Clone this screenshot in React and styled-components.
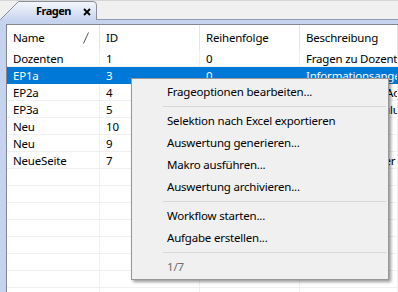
import React from "react";
import styled, { createGlobalStyle } from "styled-components";

const GlobalStyle = createGlobalStyle`
  body {
    margin: 0;
    font-family: "Noto Sans", "Open Sans", sans-serif;
    font-size: 11.5px;
    letter-spacing: -0.2px;
    color: #000;
  }
`;

const Window = styled.div`
  position: relative;
  width: 398px;
  height: 292px;
  overflow: hidden;
  background: #f0f0f0;
  display: flex;
  flex-direction: column;
`;

const TabStrip = styled.div`
  height: 20px;
  flex: none;
  display: flex;
  align-items: flex-end;
  border-top: 1px solid #d6d6d6;
  box-sizing: border-box;
  border-bottom: 1px solid #8f9bb3;
`;

const Tab = styled.div`
  position: relative;
  width: 97px;
  height: 20px;
  margin-bottom: -1px;
  display: flex;
  align-items: center;
  gap: 12px;
  padding-left: 36px;
  box-sizing: border-box;

  svg.shape {
    position: absolute;
    left: 0;
    top: 0;
  }
`;

const TabLabel = styled.span`
  position: relative;
  font-weight: bold;
  font-size: 11px;
  letter-spacing: -0.5px;
  line-height: 16px;
  margin-top: 1px;
`;

const TabClose = styled.svg`
  position: relative;
  margin-top: 3px;
`;

const Pane = styled.div`
  flex: 1;
  background: #c6d3ee;
  padding: 4px 0 0 6px;
  display: flex;
  min-height: 0;
`;

const Grid = styled.div`
  flex: 1;
  background: #fff;
  border-left: 1px solid #828790;
  border-top: 1px solid #828790;
  display: flex;
  flex-direction: column;
  overflow: hidden;
`;

const cols = "93px 100px 100px 1fr";

const HeaderRow = styled.div`
  display: grid;
  grid-template-columns: ${cols};
  height: 25px;
  flex: none;
`;

const HeaderCell = styled.div`
  position: relative;
  padding-left: 6px;
  line-height: 25px;
  border-right: 1px solid #e5e5e5;
  white-space: nowrap;

  svg {
    position: absolute;
    left: 75px;
    top: 7px;
  }
`;

const Row = styled.div`
  display: grid;
  grid-template-columns: ${cols};
  height: 17px;
  flex: none;
  background: ${(p) => (p.$selected ? "#0078d7" : "#fff")};
  color: ${(p) => (p.$selected ? "#fff" : "#000")};
`;

const Cell = styled.div`
  padding-left: 6px;
  line-height: 17px;
  white-space: nowrap;
  overflow: hidden;
  box-sizing: border-box;
  border-right: 1px solid ${(p) => (p.$selected ? "#0078d7" : "#f0f0f0")};
  border-bottom: 1px solid ${(p) => (p.$selected ? "#0078d7" : "#f0f0f0")};
`;

const Menu = styled.div`
  position: absolute;
  left: 131px;
  top: 78px;
  width: 258px;
  box-sizing: border-box;
  background: #f0f0f0;
  border: 1px solid #979797;
  box-shadow: 2px 2px 3px rgba(0, 0, 0, 0.4);
  padding: 2px 2px 1px 2px;
  display: flex;
  flex-direction: column;
`;

const MenuItem = styled.div`
  height: 22px;
  line-height: 22px;
  padding-left: 33px;
  color: ${(p) => (p.$disabled ? "#6d6d6d" : "#000")};
  white-space: nowrap;
`;

const Separator = styled.div`
  height: 1px;
  margin: 3px 0 3px 29px;
  background: #d7d7d7;
`;

const rows = [
  ["Dozenten", "1", "0", "Fragen zu Dozenten"],
  ["EP1a", "3", "0", "Informationsangebot"],
  ["EP2a", "4", "0", "Kontaktdaten - Adresse"],
  ["EP3a", "5", "0", "Fragen zur Schulung"],
  ["Neu", "10", "0", ""],
  ["Neu", "9", "0", ""],
  ["NeueSeite", "7", "0", "Fragen zum Alter"],
];

const menu = [
  "Frageoptionen bearbeiten...",
  "-",
  "Selektion nach Excel exportieren",
  "Auswertung generieren...",
  "Makro ausführen...",
  "Auswertung archivieren...",
  "-",
  "Workflow starten...",
  "Aufgabe erstellen...",
  "-",
];

export default function App() {
  return (
    <>
      <GlobalStyle />
      <Window>
        <TabStrip>
          <Tab>
            <svg className="shape" width="97" height="21" viewBox="0 0 97 21">
              <defs>
                <linearGradient id="tabfill" x1="0" y1="0" x2="0" y2="1">
                  <stop offset="0" stopColor="#f6f8fc" />
                  <stop offset="1" stopColor="#c6d3ee" />
                </linearGradient>
              </defs>
              <path
                d="M0.5,21 L0.5,19.5 L18.5,1.5 L93,1.5 Q96.5,1.5 96.5,5 L96.5,21 Z"
                fill="url(#tabfill)"
              />
              <path
                d="M0.5,19.5 L18.5,1.5 L93,1.5 Q96.5,1.5 96.5,5 L96.5,20"
                fill="none"
                stroke="#8a8e98"
              />
            </svg>
            <TabLabel>Fragen</TabLabel>
            <TabClose width="8" height="8" viewBox="0 0 8 8">
              <path d="M1,1 L7,7 M7,1 L1,7" stroke="#000" strokeWidth="1.8" />
            </TabClose>
          </Tab>
        </TabStrip>
        <Pane>
          <Grid>
            <HeaderRow>
              <HeaderCell>
                Name
                <svg width="8" height="12" viewBox="0 0 8 12">
                  <line x1="6.5" y1="0.5" x2="1.5" y2="11.5" stroke="#555" />
                </svg>
              </HeaderCell>
              <HeaderCell>ID</HeaderCell>
              <HeaderCell>Reihenfolge</HeaderCell>
              <HeaderCell>Beschreibung</HeaderCell>
            </HeaderRow>
            {rows.map((r, i) => (
              <Row key={i} $selected={i === 1}>
                {r.map((c, j) => (
                  <Cell key={j} $selected={i === 1}>
                    {c}
                  </Cell>
                ))}
              </Row>
            ))}
            {Array.from({ length: 8 }).map((_, i) => (
              <Row key={"e" + i}>
                <Cell>&nbsp;</Cell>
                <Cell>&nbsp;</Cell>
                <Cell>&nbsp;</Cell>
                <Cell>&nbsp;</Cell>
              </Row>
            ))}
          </Grid>
        </Pane>
        <Menu>
          {menu.map((m, i) =>
            m === "-" ? <Separator key={i} /> : <MenuItem key={i}>{m}</MenuItem>
          )}
          <MenuItem $disabled>1/7</MenuItem>
        </Menu>
      </Window>
    </>
  );
}
